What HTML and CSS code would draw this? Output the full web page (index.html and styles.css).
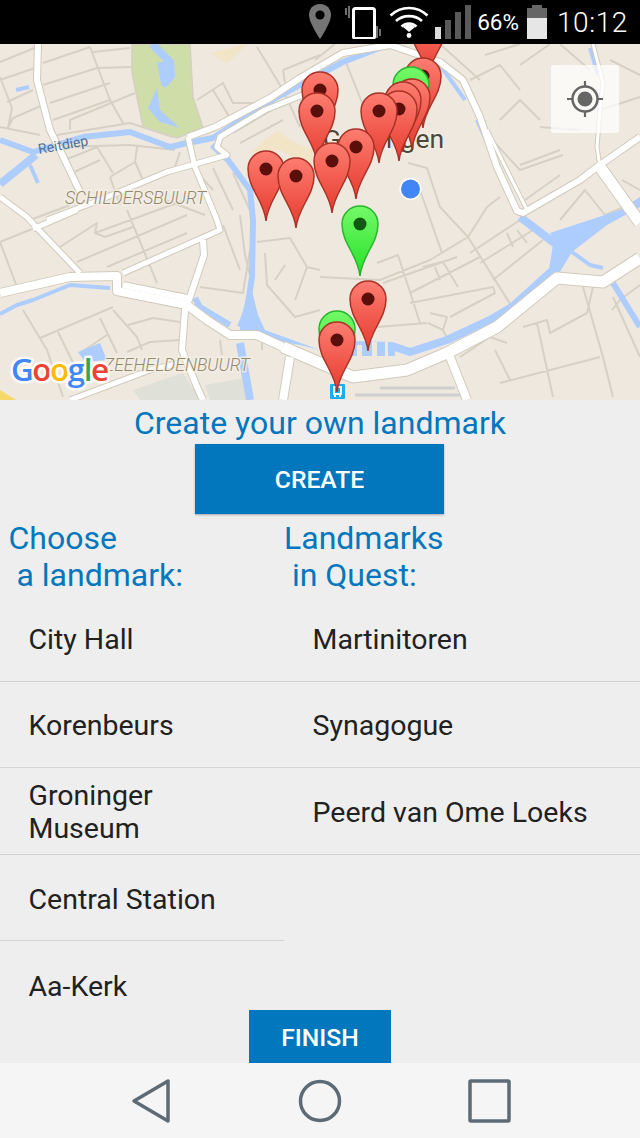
FILE: index.html
```html
<!DOCTYPE html>
<html lang="en">
<head>
<meta charset="utf-8">
<title>Create Quest</title>
<link rel="stylesheet" href="styles.css">
</head>
<body>
<div class="phone">
  <header class="status">
    <svg class="status-icon" width="24" height="36" viewBox="0 0 24 36"><path fill="#757575" d="M12 0C5 0 1 5 1 11c0 8 11 24 11 24s11-16 11-24C23 5 19 0 12 0z"/><circle cx="12" cy="11" r="4.6" fill="#000"/></svg>
    <svg class="status-icon" width="36" height="34" viewBox="0 0 36 34"><rect x="8.5" y="3.5" width="21" height="30" rx="2" fill="none" stroke="#fff" stroke-width="3"/><path d="M4 1v12M1 3v7M32 21v12M35 24v7" stroke="#8a8a8a" stroke-width="1.6" fill="none"/></svg>
    <svg class="status-icon" width="40" height="32" viewBox="0 0 40 32"><path d="M1.500 9.500C12 -0.500 28 -0.500 38.500 9.500M7 15C14 8.500 26 8.500 33 15M12.500 20.500C17 16.500 23 16.500 27.500 20.500" fill="none" stroke="#fff" stroke-width="2.700"/><path d="M14 21l6-4 6 4-6 5z" fill="#fff"/><circle cx="20" cy="29.500" r="2.400" fill="#fff"/></svg>
    <svg class="status-icon" width="37" height="34" viewBox="0 0 37 34"><rect x="0" y="22" width="6" height="12" fill="#dcdcdc"/><rect x="10" y="15" width="6" height="19" fill="#5a5a5a"/><rect x="20" y="7" width="6" height="27" fill="#5a5a5a"/><rect x="30" y="0" width="6" height="34" fill="#5a5a5a"/></svg>
    <span class="pct">66%</span>
    <svg class="status-icon" width="22" height="34" viewBox="0 0 22 34"><path d="M6 0h10v3h5v10H1V3h5z" fill="#666"/><rect x="1" y="13" width="20" height="21" fill="#e6e6e6"/></svg>
    <span class="clock">10:12</span>
  </header>

  <div class="map">
    <svg class="map-art" width="640" height="356" viewBox="0 44 640 356">
      <defs>
        <linearGradient id="redFill" x1="0" y1="0" x2="0" y2="1"><stop offset="0" stop-color="#fe7d71"/><stop offset="1" stop-color="#e63b2e"/></linearGradient>
        <linearGradient id="greenFill" x1="0" y1="0" x2="0" y2="1"><stop offset="0" stop-color="#74f968"/><stop offset="1" stop-color="#26e028"/></linearGradient>
        <g id="redPin"><path d="M19 71C17 50 1 39 1 19A18 18 0 0 1 37 19C37 39 21 50 19 71Z" fill="url(#redFill)" stroke="#a93226" stroke-width="1.500"/><circle cx="19" cy="19" r="6.500" fill="#5a0f0b"/></g>
        <g id="greenPin"><path d="M19 71C17 50 1 39 1 19A18 18 0 0 1 37 19C37 39 21 50 19 71Z" fill="url(#greenFill)" stroke="#28b62c" stroke-width="1.500"/><circle cx="19" cy="19" r="6.500" fill="#0f5a10"/></g>
      </defs>
      <g class="base">
      <rect x="0" y="44" width="640" height="356" fill="#efe8df"/>
      <path class="park" d="M132 44H190L193 97L203 128L177 138L143 127L132 73Z"/>
      <path class="bldg" d="M210 53L247 44L227 64ZM250 153L277 130L290 140L313 150L312 170L280 150Z"/>
      <path class="grey" d="M133 390L183 373L200 400H140ZM205 385L245 378L250 400H210Z"/>
      <path class="yellow" d="M0 390L16 400H0Z"/>

      <g class="minor">
        <path d="M0 62L37 47M0 80L35 68M43 63L90 47M43 85L97 68M7 102L33 90M8 128L13 118L43 105M50 103L110 83M53 120L110 100M90 47L110 100L123 123M93 52L130 48M97 68L132 67M70 130L70 120L135 93M0 127L40 135M57 135L130 123L173 137M0 77L12 108L8 128M63 147L130 145L175 150M65 160L97 147M72 173L100 160M97 147L113 173M137 147L135 162L110 177M135 162L143 180M180 152L175 167M110 177L120 205M213 168L233 210M233 173L253 217M197 100L223 83L233 103L287 103M213 90L233 123M257 47L283 90L300 127M283 70L320 55M283 70L285 83M233 133L277 107M240 143L283 120M195 170L213 190M30 220L70 205M165 200L205 215"/>
        <path d="M0 242L37 227M60 247L97 223L95 233L105 237L133 227M77 262L187 215M95 233L185 200M107 267L187 233M127 210L157 283M0 242L17 287M23 310L47 350L63 397M40 338L113 307M100 318L117 353M58 332L80 377M80 353L107 335M113 310L137 337L142 350M128 325L153 318L180 322M127 352L150 342L180 340M257 242L290 238L307 267M265 253L267 285L295 317L320 310M285 265L275 280M320 270L307 267L295 300M200 287L243 293L250 250M240 215L245 255L250 275M223 225L240 270M220 340L222 355M262 342L262 350"/>
        <path d="M408 163L427 168L440 207L468 237L512 307M420 190L442 253M468 237L487 207L500 197M468 237L430 260L380 280L320 277M470 253L520 220M480 263L533 230M493 280L543 240M507 233L513 247M517 230L527 243M377 263L398 255L420 323M423 267L442 262M435 267L440 280M443 262L458 287M383 283L457 257M410 293L480 257M410 303L493 287L495 293L450 317M430 313L447 317L443 330L428 323M377 327L427 323M443 330L448 340M460 357L490 337L507 343M500 383L600 357M523 327L547 320L550 333L587 313L593 287M583 287L603 357L613 397M537 323L553 397M613 297L640 357M640 285L620 300L612 310M495 350L510 380M483 130L520 170L563 155M500 120L520 100L540 120M525 200L560 175M520 165L560 150M540 127L580 130M600 110L640 97M560 44L590 70M610 60L640 75M622 180L640 190M560 220L585 190L605 215L640 200M470 80L500 65L520 90M520 65L550 44M485 55L520 44M440 44L480 80M345 60L365 110M315 60L335 44"/>
      </g>

      <g class="water">
        <path d="M0 140L33 152L83 137L130 132L170 147L187 143L213 138L277 97L300 85L343 62L382 47" class="w5"/>
        <path d="M0 184L36 155" class="w7"/>
        <path d="M30 165L38 183" class="w3"/>
        <path d="M16 90L29 87" class="w3"/>
        <path d="M152 44L170 62L171 76L165 83L161 62" class="w7"/>
        <path d="M148 108L157 88L160 110L180 128L160 122Z" class="fill"/>
        <path d="M212 145L228 160L250 190L253 220L252 277L247 310L240 327" class="w5"/>
        <path d="M240 322L250 283L258 315L265 330L320 350L300 345L240 335Z" class="fill"/>
        <path d="M240 343L250 400" class="w7"/>
        <path d="M0 314L17 305L33 300L70 285L110 288" class="w3"/>
        <path d="M195 298L200 307L230 325" class="w5"/>
        <path d="M78 352L100 343L107 360L85 362Z" class="fill"/>
        <path d="M352 345L392 346L410 352L447 340L490 320L512 307L553 270L557 245L520 217" class="w7"/>
        <path d="M550 233L620 210L640 197V207L607 225L572 252L555 280L550 270L557 245Z" class="fill"/>
        <path d="M572 252L590 265L603 268" class="w3"/>
        <path d="M613 283L640 327" class="w5"/>
        <path d="M477 120L497 165L517 212" class="w3"/>
        <path d="M590 48L598 75" class="w3"/>
        <path d="M440 65L465 100" class="w3"/>
        <path d="M340 350H395" class="w9"/>
      </g>
      <path class="bridge" d="M357 345h5v15h-5zM372 342h5v18h-5zM385 342h3v16h-3z"/>

      <g class="casing">
        <path d="M0 293L70 277L117 276L117 291L187 305L207 320L230 335L257 335L283 347" class="r7"/>
        <path d="M283 347L320 363L353 377L407 370L447 353L497 327L557 278L603 282L640 258" class="r9"/>
        <path d="M38 44L37 80L50 130L60 150L80 192" class="r5"/>
        <path d="M0 197L27 217L37 228L80 273" class="r4"/>
        <path d="M33 229L77 210" class="r4"/>
        <path d="M47 220L100 200L167 172L227 155L217 147L220 137L265 110L320 88" class="r4"/>
        <path d="M188 137L215 127L270 98L300 78L343 53L390 45L440 62L463 80L480 117L497 167L517 211L523 213L580 180L597 167L640 137" class="r5"/>
        <path d="M487 130L527 210L585 178" class="r3"/>
        <path d="M188 137L195 167L217 220L220 230L123 273" class="r4"/>
        <path d="M123 285L187 298" class="r5"/>
        <path d="M203 240L204 255L190 297L185 310L182 350L197 387L203 400" class="r5"/>
        <path d="M70 400L150 370L180 363" class="r4"/>
        <path d="M283 400L290 357" class="r7"/>
        <path d="M450 357L467 400" class="r7"/>
        <path d="M600 167L640 223" class="r9"/>
        <path d="M593 44L603 83L600 110L597 147L600 167" class="r3"/>
      </g>
      <g class="fillroad">
        <path d="M0 293L70 277L117 276L117 291L187 305L207 320L230 335L257 335L283 347" class="r7"/>
        <path d="M283 347L320 363L353 377L407 370L447 353L497 327L557 278L603 282L640 258" class="r9"/>
        <path d="M38 44L37 80L50 130L60 150L80 192" class="r5"/>
        <path d="M0 197L27 217L37 228L80 273" class="r4"/>
        <path d="M33 229L77 210" class="r4"/>
        <path d="M47 220L100 200L167 172L227 155L217 147L220 137L265 110L320 88" class="r4"/>
        <path d="M188 137L215 127L270 98L300 78L343 53L390 45L440 62L463 80L480 117L497 167L517 211L523 213L580 180L597 167L640 137" class="r5"/>
        <path d="M487 130L527 210L585 178" class="r3"/>
        <path d="M188 137L195 167L217 220L220 230L123 273" class="r4"/>
        <path d="M123 285L187 298" class="r5"/>
        <path d="M203 240L204 255L190 297L185 310L182 350L197 387L203 400" class="r5"/>
        <path d="M70 400L150 370L180 363" class="r4"/>
        <path d="M283 400L290 357" class="r7"/>
        <path d="M450 357L467 400" class="r7"/>
        <path d="M600 167L640 223" class="r9"/>
        <path d="M593 44L603 83L600 110L597 147L600 167" class="r3"/>
      </g>

      <path class="rail" d="M355 395H460M380 388H455"/>
      </g>

      <text class="lbl-water" transform="translate(39 154) rotate(-10)">Reitdiep</text>
      <text class="lbl-area" x="65" y="204">SCHILDERSBUURT</text>
      <text class="lbl-area" x="104" y="371">ZEEHELDENBUURT</text>
      <text class="lbl-city" x="323" y="148">Groningen</text>

      <text class="google" x="11" y="381"><tspan fill="#4285f4">G</tspan><tspan fill="#ea4335">o</tspan><tspan fill="#fbbc05">o</tspan><tspan fill="#4285f4">g</tspan><tspan fill="#34a853">l</tspan><tspan fill="#ea4335">e</tspan></text>

      <rect x="330" y="384" width="15" height="15" rx="1" fill="#1cabf5"/>
      <path d="M334 387v7h7v-7zM334 396h2M339 396h2" fill="none" stroke="#fff" stroke-width="1.800"/>

      <circle cx="410.500" cy="189" r="11" fill="#fff"/>
      <circle cx="410.500" cy="189" r="9.500" fill="#4285f4"/>

      <use href="#redPin" x="409" y="7"/>
      <use href="#redPin" x="404" y="57"/>
      <use href="#greenPin" x="392" y="66"/>
      <use href="#redPin" x="393" y="78"/>
      <use href="#redPin" x="384" y="81"/>
      <use href="#redPin" x="380" y="90"/>
      <use href="#redPin" x="360" y="92"/>
      <use href="#redPin" x="301" y="71"/>
      <use href="#redPin" x="298" y="92"/>
      <use href="#redPin" x="337" y="128"/>
      <use href="#redPin" x="313" y="142"/>
      <use href="#redPin" x="247" y="150"/>
      <use href="#redPin" x="277" y="157"/>
      <use href="#greenPin" x="341" y="205"/>
      <use href="#redPin" x="349" y="280"/>
      <use href="#greenPin" x="318" y="310"/>
      <use href="#redPin" x="318" y="321"/>
    </svg>
    <div class="locate">
      <svg width="38" height="38" viewBox="0 0 38 38"><circle cx="19" cy="19" r="12.500" fill="none" stroke="#666" stroke-width="2.500"/><circle cx="19" cy="19" r="7.500" fill="#666"/><path d="M19 1v5M19 32v5M1 19h5M32 19h5" stroke="#666" stroke-width="2.200"/></svg>
    </div>
  </div>

  <main class="panel">
    <h1 class="heading center">Create your own landmark</h1>
    <div class="center-row"><button class="btn btn-create">CREATE</button></div>
    <div class="columns">
      <section class="col col-left">
        <h2 class="heading col-head">Choose
 a landmark:</h2>
        <ul class="list">
          <li class="row">City Hall</li>
          <li class="row">Korenbeurs</li>
          <li class="row">Groninger<br>Museum</li>
          <li class="row">Central Station</li>
          <li class="row row-last">Aa-Kerk</li>
        </ul>
      </section>
      <section class="col col-right">
        <h2 class="heading col-head">Landmarks
 in Quest:</h2>
        <ul class="list">
          <li class="row">Martinitoren</li>
          <li class="row">Synagogue</li>
          <li class="row">Peerd van Ome Loeks</li>
        </ul>
      </section>
    </div>
    <button class="btn btn-finish">FINISH</button>
  </main>

  <nav class="navbar">
    <svg width="42" height="46" viewBox="0 0 42 46"><path d="M37 3V43L3 23Z" fill="none" stroke="#5d6b75" stroke-width="3.500" stroke-linejoin="round"/></svg>
    <svg width="46" height="46" viewBox="0 0 46 46"><circle cx="23" cy="23" r="19.500" fill="none" stroke="#5d6b75" stroke-width="3.500"/></svg>
    <svg width="46" height="46" viewBox="0 0 46 46"><rect x="4" y="3" width="39" height="40" rx="1" fill="none" stroke="#5d6b75" stroke-width="3.500"/></svg>
  </nav>
</div>
</body>
</html>
```

FILE: styles.css
```css
* { box-sizing: border-box; }
html, body { margin: 0; padding: 0; }
body { font-family: Roboto, "Liberation Sans", sans-serif; background: #eee; }
.phone { width: 640px; height: 1138px; display: flex; flex-direction: column; overflow: hidden; }

.status { height: 44px; flex: none; background: #000; display: flex; align-items: center; justify-content: flex-end; padding-right: 12px; color: #fff; }
.status-icon { display: block; flex: none; }
.status-icon:nth-child(1) { margin-right: 13px; }
.status-icon:nth-child(2) { margin-right: 8px; }
.status-icon:nth-child(3) { margin-right: 6px; }
.status-icon:nth-child(4) { margin-right: 5px; }
.pct { font-size: 22.500px; margin-right: 7px; }
.clock { font-size: 28px; font-weight: 300; margin-left: 9px; letter-spacing: .6px; }

.map { height: 356px; flex: none; position: relative; overflow: hidden; }
.map-art { display: block; }
.locate { position: absolute; left: 551px; top: 21px; width: 68px; height: 68px; background: rgba(255,255,255,.72); border-radius: 2px; display: flex; align-items: center; justify-content: center; }

.base { filter: blur(.4px); }
.park { fill: #cfdda8; stroke: #d5d0c3; stroke-width: 1.500; }
.bldg { fill: #f2e4c6; }
.grey { fill: #dfe0d8; }
.yellow { fill: #f6d868; }
.minor path { fill: none; stroke: #d6d1c4; stroke-width: 2; stroke-linejoin: round; }
.water path { fill: none; stroke: #aecdff; stroke-linejoin: round; }
.water .w3 { stroke-width: 4; }
.water .w5 { stroke-width: 6; }
.water .w7 { stroke-width: 8; }
.water .w9 { stroke-width: 12; }
.water .fill { fill: #aecdff; stroke: none; }
.bridge { fill: #efe8df; }
.casing path, .fillroad path { fill: none; stroke-linejoin: round; }
.casing path { stroke: #d0cabb; }
.fillroad path { stroke: #fff; }
.fillroad .r3 { stroke-width: 3; }
.fillroad .r4 { stroke-width: 5; }
.fillroad .r5 { stroke-width: 6; }
.fillroad .r7 { stroke-width: 8; }
.fillroad .r9 { stroke-width: 11; }
.casing .r3 { stroke-width: 5; }
.casing .r4 { stroke-width: 7; }
.casing .r5 { stroke-width: 8; }
.casing .r7 { stroke-width: 10; }
.casing .r9 { stroke-width: 13; }
.rail { fill: none; stroke: #cfcfd0; stroke-width: 3; }

.lbl-water { font: 400 14px Roboto, sans-serif; fill: #4f7299; }
.lbl-area { font: italic 300 17.500px Roboto, sans-serif; fill: #93886a; paint-order: stroke; stroke: rgba(244,240,232,.8); stroke-width: 3px; }
.lbl-city { font: 400 26.500px Roboto, sans-serif; fill: #4d4636; paint-order: stroke; stroke: #f4f0e8; stroke-width: 2px; }
.google { font: 600 31.500px "Open Sans", sans-serif; letter-spacing: -1.500px; paint-order: stroke; stroke: rgba(255,255,255,.85); stroke-width: 5px; stroke-linejoin: round; }

.panel { flex: 1; position: relative; overflow: hidden; background: #eee; }
.heading { margin: 0; font-size: 32px; font-weight: 400; color: #0277bd; line-height: 37px; }
.center { text-align: center; padding-top: 5px; height: 44px; }
.center-row { display: flex; justify-content: center; }
.btn { display: block; border: 0; border-radius: 0; padding: 0; background: #0277bd; color: #fff; font-family: Roboto, sans-serif; font-weight: 500; font-size: 24.700px; }
.btn-create { width: 249px; height: 70px; margin-left: -1px; box-shadow: 0 1px 2px rgba(0,0,0,.3); }
.btn-finish { position: absolute; left: 249px; bottom: 0; width: 142px; height: 53px; padding-top: 2px; }

.columns { display: grid; grid-template-columns: 284px 356px; padding-top: 5px; }
.col-head { white-space: pre; height: 76px; padding-top: 1px; }
.col-left .col-head { padding-left: 8.500px; }
.col-right .col-head { padding-left: 0; }
.list { list-style: none; margin: 0; padding: 0; }
.row { height: 86.600px; display: flex; align-items: center; padding-left: 28.500px; padding-top: 3px; font-size: 28.500px; line-height: 33px; color: #212121; border-bottom: 1.500px solid #d4d4d4; }
.row-last { border-bottom: 0; }

.navbar { height: 75px; flex: none; background: #f5f5f5; display: flex; align-items: center; padding-left: 131px; position: relative; }
.navbar svg { display: block; flex: none; }
.navbar svg:nth-child(1) { margin-right: 124px; }
.navbar svg:nth-child(2) { margin-right: 123px; }
```
